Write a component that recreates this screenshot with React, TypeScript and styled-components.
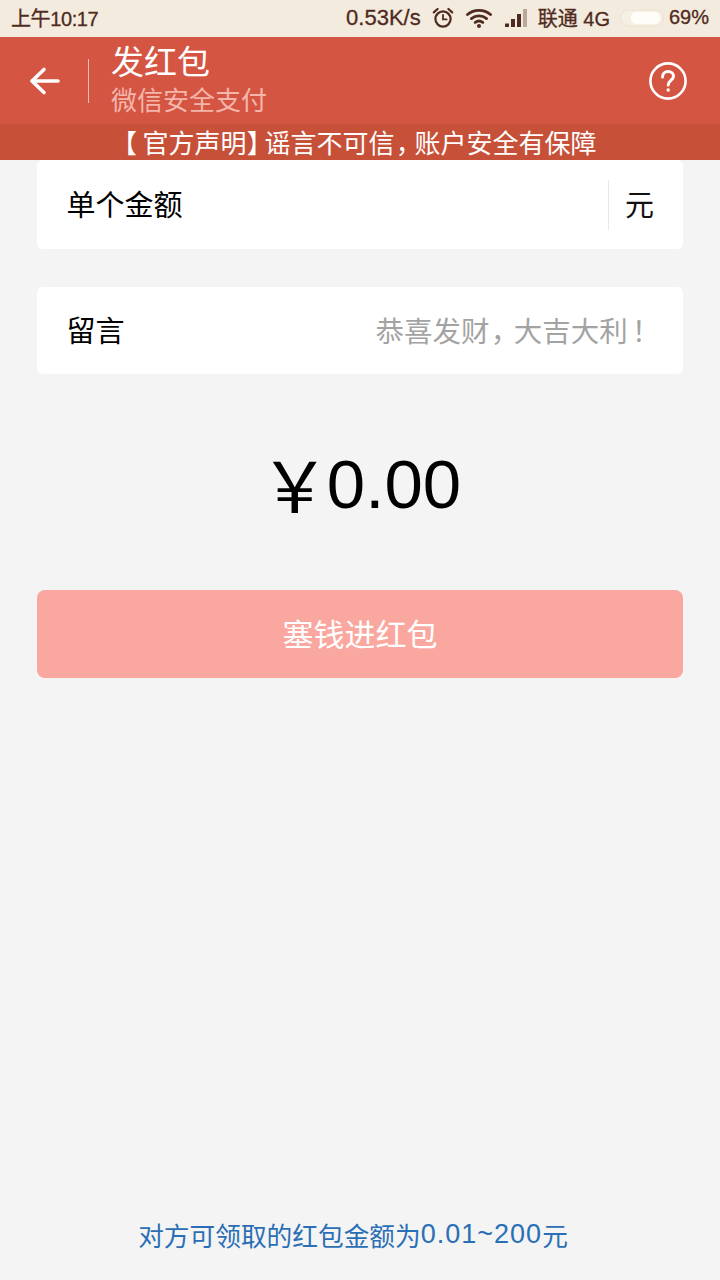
import React from 'react'
import styled, { createGlobalStyle } from 'styled-components'

const GlobalStyle = createGlobalStyle`
  html, body {
    margin: 0;
    padding: 0;
    background: #f4f4f4;
  }
  * {
    box-sizing: border-box;
  }
`

const Page = styled.div`
  width: 720px;
  height: 1280px;
  display: flex;
  flex-direction: column;
  overflow: hidden;
  background: #f4f4f4;
  font-family: "Liberation Sans", "Noto Sans CJK SC", sans-serif;
`

const StatusBar = styled.div`
  height: 37px;
  flex: none;
  display: flex;
  align-items: center;
  justify-content: space-between;
  padding: 0 11px 2px 11px;
  background: #f3ebdd;
  color: #4f2a20;
  font-size: 20px;
  -webkit-text-stroke: 0.3px #4f2a20;
`
const StatusClock = styled.span`
  letter-spacing: -0.4px;
`
const StatusRight = styled.div`
  display: flex;
  align-items: center;
`
const StatusText = styled.span<{ $gap?: number; $size?: number }>`
  margin-left: ${(p) => p.$gap ?? 0}px;
  font-size: ${(p) => p.$size ?? 20}px;
`

const Header = styled.header`
  height: 87px;
  flex: none;
  display: flex;
  align-items: center;
  padding: 0 33px 0 29px;
  background: #d55543;
`
const BackButton = styled.div`
  width: 32px;
  height: 32px;
  display: flex;
`
const HeaderLine = styled.div`
  width: 1px;
  height: 44px;
  margin: 0 22px 0 27px;
  background: #f0bdb4;
`
const HeaderTitles = styled.div`
  flex: 1;
  display: flex;
  flex-direction: column;
  margin-top: -3px;
`
const Title = styled.div`
  color: #fff;
  font-size: 33px;
  line-height: 46px;
`
const Subtitle = styled.div`
  margin-top: -3px;
  color: #f4b5ab;
  font-size: 26px;
  line-height: 36px;
`

const Notice = styled.div`
  height: 36px;
  flex: none;
  display: flex;
  align-items: center;
  justify-content: center;
  padding-bottom: 2px;
  background: #c75039;
  color: #fff;
  font-size: 26px;
  font-feature-settings: "palt";
  white-space: nowrap;
`
const NoticeText = styled.span``
const Punct = styled.span<{ $left?: number; $right?: number }>`
  margin-left: ${(p) => p.$left ?? 0}px;
  margin-right: ${(p) => p.$right ?? 0}px;
`

const Content = styled.main`
  flex: 1;
  display: flex;
  flex-direction: column;
  padding: 0 37px;
`
const Card = styled.div<{ $top: number; $height: number }>`
  height: ${(p) => p.$height}px;
  margin-top: ${(p) => p.$top}px;
  display: flex;
  align-items: center;
  padding: 0 29px 3px 29.5px;
  border-radius: 6px;
  background: #fff;
`
const Label = styled.span`
  flex: 1;
  color: #000;
  font-size: 29px;
`
const Divider = styled.div`
  width: 1px;
  height: 50px;
  margin: 3px 16px 0 0;
  background: #e8e8e8;
`
const Unit = styled.span`
  color: #111;
  font-size: 29px;
`
const Placeholder = styled.span`
  margin-right: 8px;
  color: #a3a3a3;
  font-size: 28.5px;
  font-feature-settings: "palt";
`

const Amount = styled.div`
  margin-top: 64px;
  height: 92px;
  display: flex;
  align-items: center;
  justify-content: center;
  padding-left: 1px;
  color: #000;
  font-size: 69px;
`
const Yen = styled.span`
  margin-bottom: 3px;
  letter-spacing: -3px;
  font-family: "Noto Sans CJK SC", sans-serif;
  font-size: 70px;
`

const SubmitButton = styled.button`
  height: 88px;
  margin-top: 60px;
  padding: 0 0 3px;
  border: 0;
  border-radius: 8px;
  background: #faa79f;
  color: #fff;
  font-family: inherit;
  font-size: 31px;
`

const FootNote = styled.div`
  height: 44px;
  margin: auto 0 24px;
  display: flex;
  align-items: center;
  justify-content: center;
  padding-right: 14px;
  color: #2a6fb5;
  font-size: 25.7px;
  white-space: pre;
`
const FootRange = styled.span`
  font-size: 27px;
  letter-spacing: 1px;
`

const BackIcon = () => (
  <svg width="32" height="32" viewBox="0 0 32 32" fill="none" stroke="#fff" strokeWidth="3.6" strokeLinecap="round" strokeLinejoin="round">
    <path d="M29 16H3.5" />
    <path d="M15 4.5 3 16 15 27.5" />
  </svg>
)

const HelpIcon = () => (
  <svg width="38" height="38" viewBox="0 0 38 38" fill="none" stroke="#fff" strokeWidth="2.6" strokeLinecap="round">
    <circle cx="19" cy="19" r="17.6" />
    <path d="M13.5 15c0-3.4 2.4-5.4 5.6-5.4 3.1 0 5.4 1.9 5.4 4.7 0 4-5.3 4.2-5.3 8.6" strokeWidth="3" />
    <circle cx="19.2" cy="28" r="1.7" fill="#fff" stroke="none" />
  </svg>
)

const AlarmIcon = () => (
  <svg width="22" height="22" viewBox="0 0 22 22" fill="none" stroke="#4f2a20" strokeWidth="2.2" strokeLinecap="round" style={{ marginLeft: 11 }}>
    <circle cx="11" cy="12" r="7.6" />
    <path d="M11 7.8V12.4H14.6" strokeWidth="1.8" />
    <path d="M1.8 5.4 5.6 2" />
    <path d="M20.2 5.4 16.4 2" />
  </svg>
)

const WifiIcon = () => (
  <svg width="26" height="20" viewBox="0 0 26 20" fill="none" stroke="#4f2a20" strokeWidth="2.8" strokeLinecap="round" style={{ marginLeft: 12 }}>
    <path d="M1.5 6.5C8 1 18 1 24.5 6.5" />
    <path d="M5.4 10.6C9.8 7 16.2 7 20.6 10.6" />
    <path d="M9.2 14.4C11.4 12.8 14.6 12.8 16.8 14.4" />
    <circle cx="13" cy="18" r="2" fill="#4f2a20" stroke="none" />
  </svg>
)

const SignalIcon = () => (
  <svg width="23" height="20" viewBox="0 0 23 20" style={{ marginLeft: 13 }}>
    <rect x="0" y="15.5" width="4" height="3.5" fill="#4f2a20" />
    <rect x="6" y="11" width="4" height="8" fill="#4f2a20" />
    <rect x="12" y="6" width="4" height="13" fill="#4f2a20" />
    <rect x="18" y="1" width="4" height="18" fill="#b9a89c" />
  </svg>
)

const BatteryIcon = () => (
  <svg width="44" height="18" viewBox="0 0 44 18" style={{ marginLeft: 10 }}>
    <rect x="0.5" y="1" width="43" height="16" rx="8" fill="#f6efe3" stroke="#ece2d1" />
    <rect x="11" y="3" width="29" height="12" rx="5" fill="#fffdf8" />
  </svg>
)

const App: React.FC = () => {
  return (
    <Page>
      <GlobalStyle />
      <StatusBar>
        <StatusClock>上午10:17</StatusClock>
        <StatusRight>
          <StatusText $size={22}>0.53K/s</StatusText>
          <AlarmIcon />
          <WifiIcon />
          <SignalIcon />
          <StatusText $gap={10}>联通 4G</StatusText>
          <BatteryIcon />
          <StatusText $gap={5}>69%</StatusText>
        </StatusRight>
      </StatusBar>

      <Header>
        <BackButton>
          <BackIcon />
        </BackButton>
        <HeaderLine />
        <HeaderTitles>
          <Title>发红包</Title>
          <Subtitle>微信安全支付</Subtitle>
        </HeaderTitles>
        <HelpIcon />
      </Header>

      <Notice>
        <NoticeText>
          <Punct $right={6}>【</Punct>官方声明<Punct $left={1} $right={4}>】</Punct>谣言不可信
          <Punct $left={3} $right={4}>，</Punct>账户安全有保障
        </NoticeText>
      </Notice>

      <Content>
        <Card $top={0} $height={89}>
          <Label>单个金额</Label>
          <Divider />
          <Unit>元</Unit>
        </Card>
        <Card $top={38} $height={87}>
          <Label>留言</Label>
          <Placeholder>
            恭喜发财<Punct $left={3} $right={7}>，</Punct>大吉大利<Punct $left={4}>！</Punct>
          </Placeholder>
        </Card>

        <Amount>
          <Yen>￥</Yen>0.00
        </Amount>

        <SubmitButton>塞钱进红包</SubmitButton>

        <FootNote>
          对方可领取的红包金额为<FootRange>0.01~200</FootRange>元
        </FootNote>
      </Content>
    </Page>
  )
}

export default App
